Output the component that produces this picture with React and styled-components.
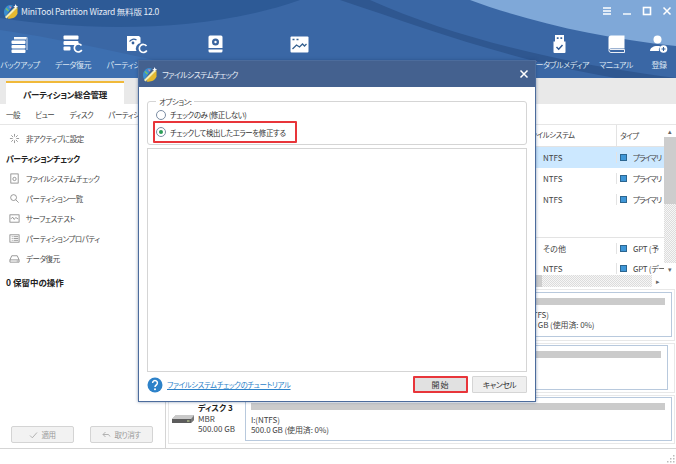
import React from "react";
import styled, { createGlobalStyle } from "styled-components";

const GlobalStyle = createGlobalStyle`
  html, body {
    margin: 0;
    padding: 0;
    background: #fff;
  }

  body {
    font-family: "Noto Sans CJK JP", "Noto Sans", sans-serif;
    font-feature-settings: "palt";
    font-size: 7.5px;
    letter-spacing: -0.45px;
    color: #444;
  }
`;

const Logo = () => (
  <svg width="16" height="15" viewBox="0 0 16 15">
    <path d="M1 8c0-3.500 2.500-6.500 6-7 1 0 2 .2 2.800.6L2.500 13C1.500 11.500 1 10 1 8z" fill="#3a8ed0" />
    <path d="M4.500 14.500c4 .7 8.500-.7 10-5L14.500 3 6 11.500z" fill="#e5b92f" />
    <path d="M2 13 12.500 2.500 14 4 3.500 14.500z" fill="#f7eeb0" />
    <path d="M12.500 0l.8 1.700 1.900.5-1.700.9-.5 1.900-.9-1.700-1.900-.5 1.700-.9z" fill="#fff" />
    <path d="M3 4.500l2.500 2.500" stroke="#7fc35a" strokeWidth="1.400" />
    <path d="M6.500 2.500l1.500 1.500" stroke="#e77fa0" strokeWidth="1.200" />
  </svg>
);

const BackupIcon = () => (
  <svg width="18" height="17" viewBox="0 0 18 17" fill="#fff">
    <rect x="0.500" y="4.500" width="14" height="3.500" rx="1" />
    <rect x="0.500" y="9" width="14" height="3.500" rx="1" />
    <rect x="0.500" y="13.500" width="14" height="3.500" rx="1" />
    <path d="M3 1h12.500a1 1 0 0 1 1 1v12h-1V2.500H3z" opacity="0.750" />
    <path d="M3 1h12v2.500H3z" opacity="0.850" />
  </svg>
);

const DataIcon = () => (
  <svg width="20" height="18" viewBox="0 0 20 18">
    <rect x="0.500" y="0.500" width="15" height="4" rx="1" fill="#fff" />
    <rect x="0.500" y="6" width="15" height="4" rx="1" fill="#fff" />
    <rect x="0.500" y="11.500" width="7" height="4" rx="1" fill="#fff" />
    <path d="M18.500 10.500a4 4 0 1 0 .3 4.500" fill="none" stroke="#fff" strokeWidth="1.700" />
  </svg>
);

const PartitionIcon = () => (
  <svg width="22" height="19" viewBox="0 0 22 19">
    <path d="M1 1h12l1.500 1.500V8a5.500 5.500 0 0 0-4 8H1z" fill="#fff" />
    <path d="M3.500 6.500a5 5 0 0 1 7-1.500" fill="none" stroke="#34609b" strokeWidth="1.300" />
    <circle cx="7" cy="8" r="1.400" fill="#34609b" />
    <path d="M20.500 11a4 4 0 1 0 .3 4.500" fill="none" stroke="#fff" strokeWidth="1.700" />
  </svg>
);

const DiskIcon = () => (
  <svg width="15" height="18" viewBox="0 0 15 18">
    <path d="M.500 2A1.500 1.500 0 0 1 2 .500h11A1.500 1.500 0 0 1 14.500 2v11H.500z" fill="#fff" />
    <path d="M.500 14.500h14V16a1.500 1.500 0 0 1-1.500 1.500H2A1.500 1.500 0 0 1 .500 16z" fill="#fff" />
    <circle cx="7.500" cy="7" r="3.500" fill="#3a659f" />
    <circle cx="7.500" cy="7" r="1.200" fill="#fff" />
  </svg>
);

const ChartIcon = () => (
  <svg width="19" height="17" viewBox="0 0 19 17">
    <rect x="0.500" y="0.500" width="18" height="16" rx="1" fill="#fff" />
    <path d="M2.500 13l4-4 3 2 3-3 2 2 2-2" fill="none" stroke="#35608f" strokeWidth="1.300" />
    <path d="M2.500 3.500h2M6.500 3.500h2" stroke="#35608f" strokeWidth="1.300" />
  </svg>
);

const UsbIcon = () => (
  <svg width="13" height="18" viewBox="0 0 13 18">
    <path d="M2 0h9v7H2z" fill="#fff" />
    <path d="M3.800 2.300h1.800v1.800H3.800zM7.400 2.300h1.800v1.800H7.400z" fill="#3a659f" />
    <path d="M.500 6.500h12V17a1 1 0 0 1-1 1h-10a1 1 0 0 1-1-1z" fill="#fff" />
    <path d="M3.500 12l2.200 2.200L9.500 10" fill="none" stroke="#2f5a94" strokeWidth="1.500" />
  </svg>
);

const BookIcon = () => (
  <svg width="17" height="18" viewBox="0 0 17 18">
    <path d="M.500 3A2.500 2.500 0 0 1 3 .500h13.500v13H3A2.500 2.500 0 0 0 .500 16z" fill="#fff" />
    <path d="M1 15.500A1.800 1.800 0 0 1 3 14.500h13.500v3H3a2 2 0 0 1-2-2z" fill="none" stroke="#fff" strokeWidth="0.900" />
  </svg>
);

const UserIcon = () => (
  <svg width="18" height="18" viewBox="0 0 18 18">
    <circle cx="7.500" cy="4.500" r="4" fill="#fff" />
    <path d="M0 16c0-3 3-5 7.500-5 1 0 2 .1 3 .4A5 5 0 0 0 9 16z" fill="#fff" />
    <circle cx="13.500" cy="14" r="3.800" fill="#fff" />
    <path d="M13.500 12v4M11.500 14h4" stroke="#345f98" strokeWidth="1.100" />
  </svg>
);

const SideIcon = ({ kind }) => (
  <svg width="11" height="11" viewBox="0 0 12 12" fill="none" stroke="#777" strokeWidth="0.800">
    {kind === "pin" && <path d="M6 1v3M6 8v3M1 6h3M8 6h3M2.500 2.500l2 2M7.500 7.500l2 2M9.500 2.500l-2 2M2.500 9.500l2-2" />}
    {kind === "file" && (
      <>
        <rect x="2" y="1" width="8" height="10" />
        <circle cx="6" cy="6.500" r="1.800" />
      </>
    )}
    {kind === "search" && (
      <>
        <circle cx="5" cy="5" r="3.200" />
        <path d="M7.500 7.500L10.500 10.500" />
      </>
    )}
    {kind === "surface" && (
      <>
        <rect x="1" y="2" width="10" height="8" />
        <path d="M2 6.500l2-2 1.500 2.500L7.500 5 10 6.500" />
      </>
    )}
    {kind === "props" && (
      <>
        <rect x="1" y="2" width="10" height="8" />
        <path d="M3 4h1M5 4h5M3 6h1M5 6h5M3 8h1M5 8h5" />
      </>
    )}
    {kind === "recover" && <path d="M1 7.500l2-4.500h6l2 4.500v2.500H1zM1 7.500h10M8.500 8.800h1" />}
  </svg>
);

const CheckGlyph = () => (
  <svg width="9" height="8" viewBox="0 0 9 8" fill="none" stroke="#aaa" strokeWidth="0.900">
    <path d="M1 4.500l2.300 2.300L8 1.500" />
  </svg>
);

const UndoGlyph = () => (
  <svg width="9" height="8" viewBox="0 0 9 8" fill="none" stroke="#aaa" strokeWidth="0.900">
    <path d="M3.500 1L1 3.500 3.500 6M1 3.500h5.500l1.500 2" />
  </svg>
);

const DriveIcon = () => (
  <svg width="24" height="12" viewBox="0 0 24 12">
    <path d="M1 6l4-4h18v5l-3 3H1z" fill="#9a9a9a" />
    <path d="M1 6h19v4H1z" fill="#5c5c5c" />
    <path d="M20 6l3-3v4l-3 3z" fill="#777" />
    <path d="M5 2h18l-3 4H1z" fill="#c9c9c9" />
    <rect x="16" y="7.500" width="2.500" height="1" fill="#cfe3a0" />
  </svg>
);

const HelpIcon = () => (
  <svg width="16" height="16" viewBox="0 0 16 16">
    <circle cx="8" cy="8" r="7.500" fill="#2d82c9" />
    <path d="M5.600 6a2.400 2.400 0 1 1 3.700 2C8.500 8.500 8 9 8 10" fill="none" stroke="#fff" strokeWidth="1.500" />
    <circle cx="8" cy="12.300" r="1" fill="#fff" />
  </svg>
);

const toolsLeft = [
  { label: "バックアップ", width: 40, icon: <BackupIcon /> },
  { label: "データ復元", width: 66, icon: <DataIcon /> },
  { label: "パーティション復元", width: 62, icon: <PartitionIcon /> },
  { width: 94, icon: <DiskIcon /> },
  { width: 74, icon: <ChartIcon /> },
];

const toolsRight = [
  { label: "ブータブルメディア", width: 62, icon: <UsbIcon /> },
  { label: "マニュアル", width: 52, icon: <BookIcon /> },
  { label: "登録", width: 34, icon: <UserIcon /> },
];

const sideItems = [
  { kind: "file", label: "ファイルシステムチェック" },
  { kind: "search", label: "パーティション一覧" },
  { kind: "surface", label: "サーフェステスト" },
  { kind: "props", label: "パーティションプロパティ" },
  { kind: "recover", label: "データ復元" },
];

const rows = [
  { fs: "NTFS", type: "プライマリ", kana: true, selected: true },
  { fs: "NTFS", type: "プライマリ", kana: true },
  { fs: "NTFS", type: "プライマリ", kana: true },
  { blank: true },
  { fs: "その他", type: "GPT (予", ruled: true },
  { fs: "NTFS", type: "GPT (デー" },
];

const App = () => (
  <Page>
    <GlobalStyle />
    <Header>
      <Waves viewBox="0 0 676 78" preserveAspectRatio="none">
        <path d="M0 0h676v78H0z" fill="#3a67a5" />
        <path d="M0 0h300C210 32 90 32 0 18z" fill="#2d5a96" />
        <path d="M470 0c60 22 130 38 206 46V0z" fill="#7fa8d8" />
        <path d="M370 0c90 40 200 65 306 78h-60C510 60 430 30 340 0z" fill="#2f5790" />
        <path d="M0 30c70 10 150 30 240 48H0z" fill="#3d6fb0" />
      </Waves>
      <TitleBar>
        <Logo />
        <AppTitle>MiniTool Partition Wizard 無料版 12.0</AppTitle>
        <WindowButtons>
          <svg width="10" height="10" viewBox="0 0 10 10" stroke="#fff" strokeWidth="1.400">
            <path d="M1 2h8M1 5h8M1 8h8" />
          </svg>
          <svg width="10" height="10" viewBox="0 0 10 10" stroke="#fff" strokeWidth="1.400">
            <path d="M1 8h8" />
          </svg>
          <svg width="10" height="10" viewBox="0 0 10 10" fill="none" stroke="#fff" strokeWidth="1.600">
            <rect x="1.500" y="1.500" width="7" height="7" />
          </svg>
          <svg width="10" height="10" viewBox="0 0 10 10" stroke="#fff" strokeWidth="1.500">
            <path d="M1.500 1.500l7 7M8.500 1.500l-7 7" />
          </svg>
        </WindowButtons>
      </TitleBar>
      <Toolbar>
        <ToolGroup>
          {toolsLeft.map((tool, index) => (
            <Tool key={index} $width={tool.width}>
              <ToolIcon>{tool.icon}</ToolIcon>
              {tool.label && <ToolLabel>{tool.label}</ToolLabel>}
            </Tool>
          ))}
        </ToolGroup>
        <ToolGroup>
          {toolsRight.map((tool) => (
            <Tool key={tool.label} $width={tool.width}>
              <ToolIcon>{tool.icon}</ToolIcon>
              <ToolLabel>{tool.label}</ToolLabel>
            </Tool>
          ))}
        </ToolGroup>
      </Toolbar>
    </Header>

    <TabBar>
      <ActiveTab>パーティション総合管理</ActiveTab>
    </TabBar>

    <MenuBar>
      <span>一般</span>
      <span>ビュー</span>
      <span>ディスク</span>
      <span>パーティション</span>
    </MenuBar>

    <Content>
      <Sidebar>
        <SideItem>
          <SideIcon kind="pin" />
          <span>非アクティブに設定</span>
        </SideItem>
        <SideTitle>パーティションチェック</SideTitle>
        {sideItems.map((item) => (
          <SideItem key={item.label}>
            <SideIcon kind={item.kind} />
            <span>{item.label}</span>
          </SideItem>
        ))}
        <PendingTitle>0 保留中の操作</PendingTitle>
        <SideButtons>
          <GhostButton>
            <CheckGlyph />
            適用
          </GhostButton>
          <GhostButton>
            <UndoGlyph />
            取り消す
          </GhostButton>
        </SideButtons>
      </Sidebar>

      <Main>
        <TableArea>
          <TableBody>
            <TableRows>
              <HeaderRow>
                <FsCell>ファイルシステム</FsCell>
                <TypeCell>タイプ</TypeCell>
              </HeaderRow>
              {rows.map((row, index) =>
                row.blank ? (
                  <BlankRow key={index} />
                ) : (
                  <DataRow key={index} $selected={row.selected} $ruled={row.ruled}>
                    <FsCell $inset>{row.fs}</FsCell>
                    <TypeCell>
                      <TypeMark />
                      <TypeText $kana={row.kana}>{row.type}</TypeText>
                    </TypeCell>
                  </DataRow>
                )
              )}
            </TableRows>
            <HScroll>
              <HThumb />
              <HTrack />
              <ScrollArrow>▸</ScrollArrow>
            </HScroll>
          </TableBody>
          <VScroll>
            <ScrollArrow>▴</ScrollArrow>
            <VThumb />
            <VTrack />
            <ScrollArrow>▾</ScrollArrow>
          </VScroll>
        </TableArea>

        <DiskList>
          <DiskRow $height={52} $first>
            <DiskInfo />
            <Partition $flex={269} />
            <Partition $flex={158}>
              <UsageBar />
              <PartText>H:(NTFS)</PartText>
              <PartText>500.0 GB (使用済: 0%)</PartText>
            </Partition>
          </DiskRow>
          <DiskRow $height={50} $right={6}>
            <DiskInfo />
            <Partition $flex={1}>
              <UsageBar />
            </Partition>
          </DiskRow>
          <DiskRow $height={49}>
            <DiskInfo>
              <DriveIcon />
              <DiskText>
                <strong>ディスク 3</strong>
                <span>MBR</span>
                <span>500.00 GB</span>
              </DiskText>
            </DiskInfo>
            <Partition $flex={1}>
              <UsageBar />
              <PartText>I:(NTFS)</PartText>
              <PartText>500.0 GB (使用済: 0%)</PartText>
            </Partition>
          </DiskRow>
        </DiskList>
      </Main>
    </Content>

    <StatusBar>
      <Grip viewBox="0 0 8 8" width="8" height="8" fill="#bbb">
        <path d="M6 0h1.500v1.500H6zM3 3h1.500v1.500H3zM6 3h1.500v1.500H6zM0 6h1.500v1.500H0zM3 6h1.500v1.500H3zM6 6h1.500v1.500H6z" />
      </Grip>
    </StatusBar>

    <Dialog>
      <DialogTitle>
        <Logo />
        <DialogName>ファイルシステムチェック</DialogName>
        <svg width="10" height="10" viewBox="0 0 10 10" stroke="#fff" strokeWidth="1.500">
          <path d="M1.500 1.500l7 7M8.500 1.500l-7 7" />
        </svg>
      </DialogTitle>
      <DialogBody>
        <OptionGroup>
          <OptionLegend>オプション:</OptionLegend>
          <RadioRow>
            <Radio />
            <span>チェックのみ (修正しない)</span>
          </RadioRow>
          <RadioRow $marked>
            <Radio $checked />
            <span>チェックして検出したエラーを修正する</span>
          </RadioRow>
        </OptionGroup>
        <ResultBox />
        <DialogFooter>
          <HelpIcon />
          <TutorialLink href="#">ファイルシステムチェックのチュートリアル</TutorialLink>
          <FooterButton $marked>開始</FooterButton>
          <FooterButton>キャンセル</FooterButton>
        </DialogFooter>
      </DialogBody>
    </Dialog>
  </Page>
);

const Page = styled.div`
  position: relative;
  display: flex;
  flex-direction: column;

  width: 676px;
  height: 464px;
  overflow: hidden;
`;

const Header = styled.header`
  position: relative;

  height: 78px;
  color: #fff;
`;

const Waves = styled.svg`
  position: absolute;
  top: 0;
  left: 0;

  width: 100%;
  height: 100%;
`;

const TitleBar = styled.div`
  position: relative;
  display: flex;
  align-items: center;
  gap: 2px;

  height: 22px;
  padding: 0 4px 0 3px;
`;

const AppTitle = styled.span`
  font-size: 8.5px;
  letter-spacing: -0.2px;
  color: #e6edf6;
`;

const WindowButtons = styled.div`
  display: flex;
  gap: 10px;
  margin-left: auto;
`;

const Toolbar = styled.div`
  position: relative;
  display: flex;
  justify-content: space-between;
`;

const ToolGroup = styled.div`
  display: flex;
`;

const Tool = styled.div`
  display: flex;
  flex-direction: column;
  align-items: center;

  width: ${(props) => props.$width}px;
`;

const ToolIcon = styled.div`
  display: flex;
  align-items: center;
  justify-content: center;

  height: 18px;
  margin-top: 13px;
`;

const ToolLabel = styled.span`
  margin-top: 6px;

  font-size: 8px;
  line-height: 12px;
  white-space: nowrap;
  color: #d9e4f1;
`;

const TabBar = styled.div`
  height: 26px;
  padding-left: 6px;
  background-color: #e9e9e9;
`;

const ActiveTab = styled.div`
  display: flex;
  align-items: center;
  justify-content: center;

  width: 118px;
  height: 23px;
  margin-top: 3px;
  background-color: #fff;
  border-top: 2px solid #f0b93a;
  box-sizing: border-box;

  font-size: 8.5px;
  font-weight: 700;
  letter-spacing: -0.3px;
  color: #222;
`;

const MenuBar = styled.nav`
  display: flex;
  align-items: center;
  gap: 15px;

  height: 21px;
  padding-left: 6px;
  border-bottom: 1px solid #e6e6e6;
  box-sizing: border-box;
`;

const Content = styled.div`
  display: flex;
  flex: 1;
  min-height: 0;
`;

const Sidebar = styled.aside`
  display: flex;
  flex-direction: column;
  flex-shrink: 0;

  width: 166px;
  padding-top: 3px;
  border-right: 1px solid #d5d5d5;
  box-sizing: border-box;
`;

const SideItem = styled.div`
  display: flex;
  align-items: center;
  gap: 6px;

  height: 20px;
  padding-left: 9px;
  color: #4a4a4a;
`;

const SideTitle = styled.div`
  height: 20px;
  padding-left: 6px;

  font-size: 8px;
  font-weight: 700;
  line-height: 22px;
  color: #222;
`;

const PendingTitle = styled(SideTitle)`
  margin-top: 3px;

  font-size: 8.5px;
  letter-spacing: 0;
`;

const SideButtons = styled.div`
  display: flex;
  gap: 16px;

  margin-top: auto;
  padding: 0 0 5px 11px;
`;

const GhostButton = styled.div`
  display: flex;
  align-items: center;
  justify-content: center;
  gap: 3px;

  width: 63px;
  height: 17px;
  background-color: #f2f2f2;
  border: 1px solid #d4d4d4;
  border-radius: 2px;
  box-sizing: border-box;

  color: #9a9a9a;
`;

const Main = styled.main`
  display: flex;
  flex: 1;
  flex-direction: column;
  min-width: 0;
`;

const TableArea = styled.div`
  display: flex;
  height: 163px;
`;

const TableBody = styled.div`
  flex: 1;
  display: flex;
  flex-direction: column;
  min-width: 0;
`;

const TableRows = styled.div`
  height: 150px;
  overflow: hidden;
`;

const HeaderRow = styled.div`
  display: grid;
  grid-template-columns: 1fr 48px;

  height: 22px;
  border-bottom: 1px solid #e3e3e3;
  box-sizing: border-box;
  line-height: 20px;
`;

const DataRow = styled.div`
  display: grid;
  grid-template-columns: 1fr 48px;
  align-items: center;

  height: 21px;
  background-color: ${(props) => (props.$selected ? "#cce8ff" : "transparent")};
  border-top: ${(props) => (props.$ruled ? "1px solid #e3e3e3" : "0")};
  box-sizing: border-box;
`;

const BlankRow = styled.div`
  height: 27px;
`;

const FsCell = styled.div`
  display: flex;
  justify-content: flex-start;

  padding-left: ${(props) => (props.$inset ? "377px" : "359px")};
  font-size: ${(props) => (props.$inset ? "8px" : "7.5px")};
  letter-spacing: ${(props) => (props.$inset ? "0" : "-0.45px")};
`;

const TypeCell = styled.div`
  display: flex;
  align-items: center;
  gap: 6px;

  padding-left: 3px;
  border-left: 1px solid #e3e3e3;
  overflow: hidden;
  white-space: nowrap;
`;

const TypeMark = styled.i`
  flex-shrink: 0;

  width: 7px;
  height: 7px;
  background-color: #3f97d8;
  border: 1px solid #2c6690;
  box-sizing: border-box;
`;

const TypeText = styled.span`
  font-size: ${(props) => (props.$kana ? "7.5px" : "8px")};
  letter-spacing: ${(props) => (props.$kana ? "-0.9px" : "-0.3px")};
  color: #444;
`;

const trackPattern = `
  background: repeating-conic-gradient(#dcdcdc 0 25%, #f6f6f6 0 50%) 0 0 / 2px 2px;
`;

const HScroll = styled.div`
  display: flex;
  align-items: center;

  height: 12px;
  margin-left: 370px;
`;

const HThumb = styled.div`
  width: 6px;
  height: 100%;
  background-color: #cdcdcd;
`;

const HTrack = styled.div`
  flex: 1;
  height: 100%;
  ${trackPattern}
`;

const VScroll = styled.div`
  display: flex;
  flex-direction: column;
  align-items: center;
  flex-shrink: 0;

  width: 12px;
  height: 150px;
`;

const VThumb = styled.div`
  flex-shrink: 0;

  width: 100%;
  height: 67px;
  background-color: #cdcdcd;
`;

const VTrack = styled.div`
  flex: 1;
  width: 100%;
  ${trackPattern}
`;

const ScrollArrow = styled.span`
  flex-shrink: 0;

  width: 12px;
  height: 12px;
  background-color: #fff;

  font-size: 7px;
  line-height: 12px;
  text-align: center;
  color: #666;
`;

const DiskList = styled.div`
  display: flex;
  flex-direction: column;
  gap: 2px;

  padding: 1px 1px 0 2px;
`;

const DiskRow = styled.div`
  display: flex;

  height: ${(props) => props.$height}px;
  padding: ${(props) => (props.$first ? "2px" : "1px")} ${(props) => props.$right || 2}px
    ${(props) => (props.$first ? "3px" : "2px")} 0;
  border: 1px solid #e8e8e8;
  box-sizing: border-box;
`;

const DiskInfo = styled.div`
  display: flex;
  align-items: center;
  gap: 3px;
  flex-shrink: 0;

  width: 76px;
  padding-left: 2px;
  box-sizing: border-box;
`;

const DiskText = styled.div`
  display: flex;
  flex-direction: column;

  font-size: 8px;
  letter-spacing: 0;
  line-height: 10.500px;
  color: #444;

  strong {
    color: #222;
  }
`;

const Partition = styled.div`
  flex: ${(props) => props.$flex};
  padding: 5px 6px 0 5px;
  border: 1px solid #b8c9dd;
  box-sizing: border-box;
  min-width: 0;
`;

const UsageBar = styled.div`
  height: 7px;
  margin-bottom: 5px;
  background-color: #cbcbcb;
`;

const PartText = styled.div`
  font-size: 8px;
  letter-spacing: -0.1px;
  line-height: 10px;
  white-space: nowrap;
  color: #444;
`;

const StatusBar = styled.footer`
  display: flex;
  justify-content: flex-end;
  align-items: flex-end;

  height: 16px;
  padding: 0 1px 1px 0;
  border-top: 1px solid #d5d5d5;
  box-sizing: border-box;
`;

const Grip = styled.svg`
  display: block;
`;

const Dialog = styled.section`
  position: absolute;
  top: 60px;
  left: 138px;

  display: flex;
  flex-direction: column;

  width: 398px;
  height: 342px;
  background-color: #fff;
  border: 1px solid #4c6c9c;
  box-sizing: border-box;
  box-shadow: 0 0 3px rgba(30, 60, 110, 0.5);
`;

const DialogTitle = styled.div`
  display: flex;
  align-items: center;
  gap: 4px;

  height: 26px;
  padding: 0 6px 0 3px;
  background-color: #44618f;
  color: #e6edf6;
`;

const DialogName = styled.span`
  flex: 1;
  font-size: 8px;
  letter-spacing: -0.7px;
`;

const DialogBody = styled.div`
  display: flex;
  flex: 1;
  flex-direction: column;

  padding: 10px 8px 8px;
`;

const OptionGroup = styled.fieldset`
  margin: 0;
  padding: 2px 5px 0;
  height: 48px;
  border: 1px solid #d5d5d5;
  border-radius: 3px;
  box-sizing: border-box;
`;

const OptionLegend = styled.legend`
  margin-left: 3px;
  padding: 0 3px;

  line-height: 9px;
  color: #444;
`;

const RadioRow = styled.div`
  display: flex;
  align-items: center;
  gap: 4px;

  width: 144px;
  height: ${(props) => (props.$marked ? "22px" : "13px")};
  padding-left: 1px;
  border: ${(props) => (props.$marked ? "2px solid #e8353a" : "2px solid transparent")};
  border-width: ${(props) => (props.$marked ? "2px" : "0 2px")};
  border-radius: 1px;
  box-sizing: border-box;
  color: #333;
  white-space: nowrap;
`;

const Radio = styled.span`
  display: flex;
  align-items: center;
  justify-content: center;

  width: 10px;
  height: 10px;
  border: 1px solid #7a8ca3;
  border-radius: 50%;
  box-sizing: border-box;
  background-color: #fff;

  &::after {
    content: "";
    width: 4px;
    height: 4px;
    border-radius: 50%;
    background-color: ${(props) => (props.$checked ? "#2a9d57" : "transparent")};
  }
`;

const ResultBox = styled.div`
  height: 224px;
  margin-top: 3px;
  border: 1px solid #d5d5d5;
  box-sizing: border-box;
`;

const DialogFooter = styled.div`
  display: flex;
  align-items: center;
  gap: 4px;

  margin-top: auto;
`;

const TutorialLink = styled.a`
  flex: 1;

  color: #2d82c9;
  text-decoration: underline;
`;

const FooterButton = styled.button`
  width: 55px;
  height: 17px;
  padding: 0;
  background-color: ${(props) => (props.$marked ? "#e1e1e1" : "#efefef")};
  border: ${(props) => (props.$marked ? "2px solid #e8353a" : "1px solid #d5d5d5")};
  border-radius: 1px;
  box-sizing: border-box;

  font-family: inherit;
  font-feature-settings: inherit;
  font-size: 8px;
  letter-spacing: ${(props) => (props.$marked ? "1px" : "-0.6px")};
  color: #333;
`;

export default App;
